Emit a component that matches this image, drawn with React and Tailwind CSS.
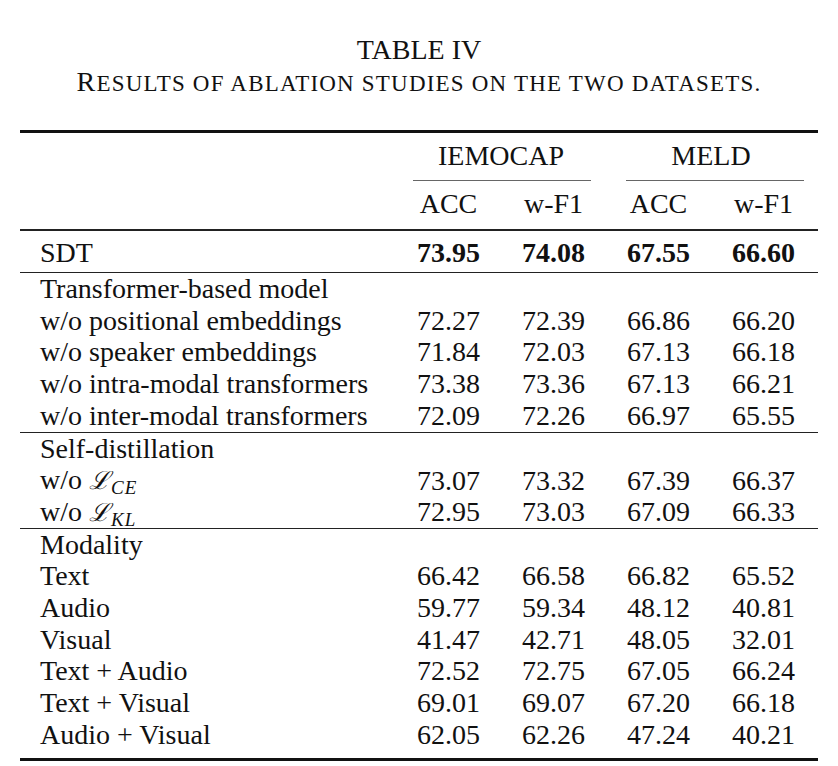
import React from 'react';

const groups = [
  {
    rows: [
      { label: 'Transformer-based model' },
      { label: 'w/o positional embeddings', vals: ['72.27', '72.39', '66.86', '66.20'] },
      { label: 'w/o speaker embeddings', vals: ['71.84', '72.03', '67.13', '66.18'] },
      { label: 'w/o intra-modal transformers', vals: ['73.38', '73.36', '67.13', '66.21'] },
      { label: 'w/o inter-modal transformers', vals: ['72.09', '72.26', '66.97', '65.55'] },
    ],
  },
  {
    rows: [
      { label: 'Self-distillation' },
      { loss: 'CE', vals: ['73.07', '73.32', '67.39', '66.37'] },
      { loss: 'KL', vals: ['72.95', '73.03', '67.09', '66.33'] },
    ],
  },
  {
    rows: [
      { label: 'Modality' },
      { label: 'Text', vals: ['66.42', '66.58', '66.82', '65.52'] },
      { label: 'Audio', vals: ['59.77', '59.34', '48.12', '40.81'] },
      { label: 'Visual', vals: ['41.47', '42.71', '48.05', '32.01'] },
      { label: 'Text + Audio', vals: ['72.52', '72.75', '67.05', '66.24'] },
      { label: 'Text + Visual', vals: ['69.01', '69.07', '67.20', '66.18'] },
      { label: 'Audio + Visual', vals: ['62.05', '62.26', '47.24', '40.21'] },
    ],
  },
];

const grid = 'grid grid-cols-[376px_105px_105px_105px_105px]';

function Row({ row, bold }) {
  return (
    <div className={`${grid} h-[31.7px] pb-[3px] items-center`}>
      <div className="pl-[20px] whitespace-nowrap">
        {row.loss ? (
          <span>
            w/o{' '}
            <span className="font-['DejaVu_Serif',serif] italic text-[25px]">ℒ</span>
            <span className="italic text-[19px] leading-none relative top-[5px] ml-[1px] tracking-[1px]">{row.loss}</span>
          </span>
        ) : (
          row.label
        )}
      </div>
      {(row.vals || []).map((v, i) => (
        <div key={i} className={`text-center ${bold ? 'font-bold' : ''}`}>
          {v}
        </div>
      ))}
    </div>
  );
}

export default function App() {
  return (
    <div className="w-[838px] h-[766px] bg-white text-[#111] font-['Liberation_Serif',serif] text-[28px] leading-[31.7px] px-[20px] pt-[34px]">
      {/* Caption */}
      <div className="text-center leading-[32px]">TABLE IV</div>
      <div className="text-center leading-[32px] tracking-[1.2px]">
        R<span className="text-[23px]">ESULTS OF ABLATION STUDIES ON THE TWO DATASETS.</span>
      </div>

      <div className="mt-[30px] border-t-[3px] border-[#111]" />

      {/* Header */}
      <div className={`${grid} mt-[7px] h-[31.7px] pb-[3px] items-center`}>
        <div />
        <div className="col-span-2 text-center">IEMOCAP</div>
        <div className="col-span-2 text-center">MELD</div>
      </div>
      <div className={`${grid} mt-[8px]`}>
        <div />
        <div className="col-span-2 ml-[17px] mr-[15px] border-t-[1.5px] border-[#666]" />
        <div className="col-span-2 ml-[20px] mr-[12px] border-t-[1.5px] border-[#666]" />
      </div>
      <div className={`${grid} mt-[7px] h-[31.7px] pb-[3px] items-center`}>
        <div />
        <div className="text-center">ACC</div>
        <div className="text-center">w-F1</div>
        <div className="text-center">ACC</div>
        <div className="text-center">w-F1</div>
      </div>
      <div className="mt-[10px] border-t-[2px] border-[#222]" />

      <div className="pt-[6px] pb-[3px]">
        <Row row={{ label: 'SDT', vals: ['73.95', '74.08', '67.55', '66.60'] }} bold />
      </div>

      {groups.map((g, gi) => (
        <div key={gi} className="border-t-[1.5px] border-[#222]">
          {g.rows.map((r, ri) => (
            <Row key={ri} row={r} />
          ))}
        </div>
      ))}

      <div className="mt-[8px] border-t-[3px] border-[#111]" />
    </div>
  );
}
